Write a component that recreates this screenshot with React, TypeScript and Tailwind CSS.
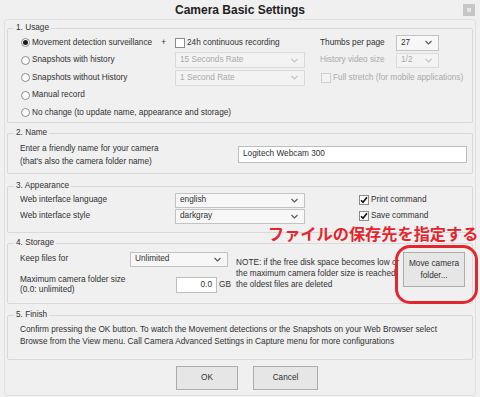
import { ReactNode } from "react"

const Chevron = ({ disabled }: { disabled?: boolean }) => (
  <svg width="7" height="5" viewBox="0 0 7 5">
    <path d="M0.5 1 L3.5 4 L6.5 1" fill="none" stroke={disabled ? "#c4c4c4" : "#555"} strokeWidth="1.1" />
  </svg>
)

function Select({ value, className, disabled }: { value: string, className: string, disabled?: boolean }) {
  return (
    <div className={`flex items-center justify-between border pl-[4px] pr-[6px] ${disabled ? "border-[#dadada] bg-[#f3f3f3] text-[#a9a9a9]" : "border-[#c3c3c3] bg-[#f7f7f7]"} ${className}`}>
      <span>{value}</span>
      <Chevron disabled={disabled} />
    </div>
  )
}

function Radio({ label, checked }: { label: string, checked?: boolean }) {
  return (
    <div className="flex items-center">
      <div className="w-[9px] h-[9px] rounded-full border border-[#8b8b8b] bg-white flex items-center justify-center">
        {checked && <div className="w-[5px] h-[5px] rounded-full bg-[#1a1a1a]" />}
      </div>
      <span className="ml-[2px]">{label}</span>
    </div>
  )
}

function Checkbox({ label, checked, disabled }: { label: string, checked?: boolean, disabled?: boolean }) {
  return (
    <div className={`flex items-center ${disabled ? "text-[#a9a9a9]" : ""}`}>
      <div className={`w-[10px] h-[10px] border flex items-center justify-center ${disabled ? "border-[#cfcfcf] bg-[#f3f3f3]" : "border-[#8b8b8b] bg-white"}`}>
        {checked && (
          <svg width="8" height="8" viewBox="0 0 8 8">
            <path d="M1 4.2 L3 6.3 L7 1.2" fill="none" stroke="#111" strokeWidth="1.6" />
          </svg>
        )}
      </div>
      <span className="ml-[2px]">{label}</span>
    </div>
  )
}

function Group({ title, className, children }: { title: string, className: string, children: ReactNode }) {
  return (
    <div className={`border border-[#d9d9d9] rounded-[2px] ${className}`}>
      <div className="-mt-[6px] ml-[6px] px-[2px] w-fit h-[10px] leading-[10px] bg-[#f0f0f0]">{title}</div>
      {children}
    </div>
  )
}

export default function App() {
  return (
    <div className="relative w-[480px] h-[397px] overflow-hidden bg-[#f0f0f0] text-[#303030] text-[8.25px] leading-none font-['Liberation_Sans',sans-serif]">

      {/* title bar */}
      <div className="grid grid-cols-[1fr_auto_1fr] items-center h-[19px]">
        <div />
        <div className="text-[12px] font-bold text-[#222]">Camera Basic Settings</div>
        <div className="flex justify-end pr-[5px]">
          <div className="w-[12px] h-[12px] bg-[#c6c6c6] flex items-center justify-center">
            <div className="w-[4px] h-[4px] bg-[#e6e6e6]" />
          </div>
        </div>
      </div>

      <div className="mx-[4px] h-[377px] border border-[#e0e0e0] rounded-[3px] px-[2px] pt-[8px]">

        <Group title="1. Usage" className="h-[95px]">
          <div className="mt-[1px] pl-[13px]">
            <div className="flex items-center h-[17.5px]">
              <div className="w-[154px] flex items-center justify-between pr-[9px]">
                <Radio checked label="Movement detection surveillance" />
                <span>+</span>
              </div>
              <div className="w-[145px]"><Checkbox label="24h continuous recording" /></div>
              <div className="w-[76px]">Thumbs per page</div>
              <Select value="27" className="w-[43px] h-[16px]" />
            </div>
            <div className="flex items-center h-[17.5px]">
              <div className="w-[154px]"><Radio label="Snapshots with history" /></div>
              <div className="w-[145px]"><Select disabled value="15 Seconds Rate" className="w-[130px] h-[16px]" /></div>
              <div className="w-[76px] text-[#a9a9a9]">History video size</div>
              <Select disabled value="1/2" className="w-[43px] h-[15px]" />
            </div>
            <div className="flex items-center h-[17.5px]">
              <div className="w-[154px]"><Radio label="Snapshots without History" /></div>
              <div className="w-[146px]"><Select disabled value="1 Second Rate" className="w-[130px] h-[16px]" /></div>
              <Checkbox disabled label="Full stretch (for mobile applications)" />
            </div>
            <div className="flex items-center h-[17.5px]">
              <Radio label="Manual record" />
            </div>
            <div className="flex items-center h-[17.5px]">
              <Radio label="No change (to update name, appearance and storage)" />
            </div>
          </div>
        </Group>

        <Group title="2. Name" className="mt-[10px] h-[41px]">
          <div className="mt-[1px] h-[31px] pl-[12px] flex items-center">
            <div className="w-[218px] leading-[13px]">
              Enter a friendly name for your camera<br />(that's also the camera folder name)
            </div>
            <div className="w-[229px] h-[17px] border border-[#bdbdbd] bg-white flex items-center pl-[4px]">
              Logitech Webcam 300
            </div>
          </div>
        </Group>

        <Group title="3. Appearance" className="mt-[12px] h-[47px]">
          <div className="mt-[1px] pl-[12px]">
            <div className="flex items-center h-[16px]">
              <div className="w-[155px]">Web interface language</div>
              <Select value="english" className="w-[130px] h-[15px]" />
              <div className="ml-[54px]"><Checkbox checked label="Print command" /></div>
            </div>
            <div className="flex items-center h-[16px]">
              <div className="w-[155px]">Web interface style</div>
              <Select value="darkgray" className="w-[130px] h-[15px]" />
              <div className="ml-[54px]"><Checkbox checked label="Save command" /></div>
            </div>
          </div>
        </Group>

        <Group title="4. Storage" className="mt-[10px] h-[61px]">
          <div className="mt-[3px] pl-[12px] flex items-start">
            <div className="w-[216px]">
              <div className="flex items-center h-[16px]">
                <div className="w-[110px]">Keep files for</div>
                <Select value="Unlimited" className="w-[98px] h-[15px]" />
              </div>
              <div className="mt-[8px] flex items-center h-[20px]">
                <div className="w-[156px] leading-[10px]">Maximum camera folder size<br />(0.0: unlimited)</div>
                <div className="w-[41px] h-[16px] border border-[#bdbdbd] bg-white flex items-center justify-end pr-[4px]">0.0</div>
                <span className="ml-[2px]">GB</span>
              </div>
            </div>
            <div className="w-[167px] mt-[5.5px] leading-[11px] whitespace-nowrap">
              NOTE: if the free disk space becomes low or<br />
              the maximum camera folder size is reached<br />
              the oldest files are deleted
            </div>
            <div className="mt-[1px] w-[62px] h-[35px] border border-[#adadad] bg-[#e6e6e6] flex items-center justify-center text-center leading-[12px]">
              Move camera<br />folder...
            </div>
          </div>
        </Group>

        <Group title="5. Finish" className="mt-[11px] h-[45px]">
          <div className="mt-[4px] pl-[12px] leading-[12px]">
            Confirm pressing the OK button. To watch the Movement detections or the Snapshots on your Web Browser select<br />
            Browse from the View menu. Call Camera Advanced Settings in Capture menu for more configurations
          </div>
        </Group>

        <div className="mt-[6px] pl-[169px] flex gap-[15px]">
          <div className="w-[62px] h-[24px] border border-[#adadad] bg-[#e6e6e6] flex items-center justify-center">OK</div>
          <div className="w-[65px] h-[24px] border border-[#adadad] bg-[#e6e6e6] flex items-center justify-center">Cancel</div>
        </div>
      </div>

      {/* red annotation */}
      <div className="absolute left-[268px] top-[224px] whitespace-nowrap text-[16.2px] leading-[19px] font-bold text-[#e3262e] font-['Noto_Sans_CJK_JP',sans-serif]">
        ファイルの保存先を指定する
      </div>
      <div className="absolute left-[395px] top-[245px] w-[83px] h-[59px] border-[3px] border-[#e3262e] rounded-[15px]" />
    </div>
  )
}
